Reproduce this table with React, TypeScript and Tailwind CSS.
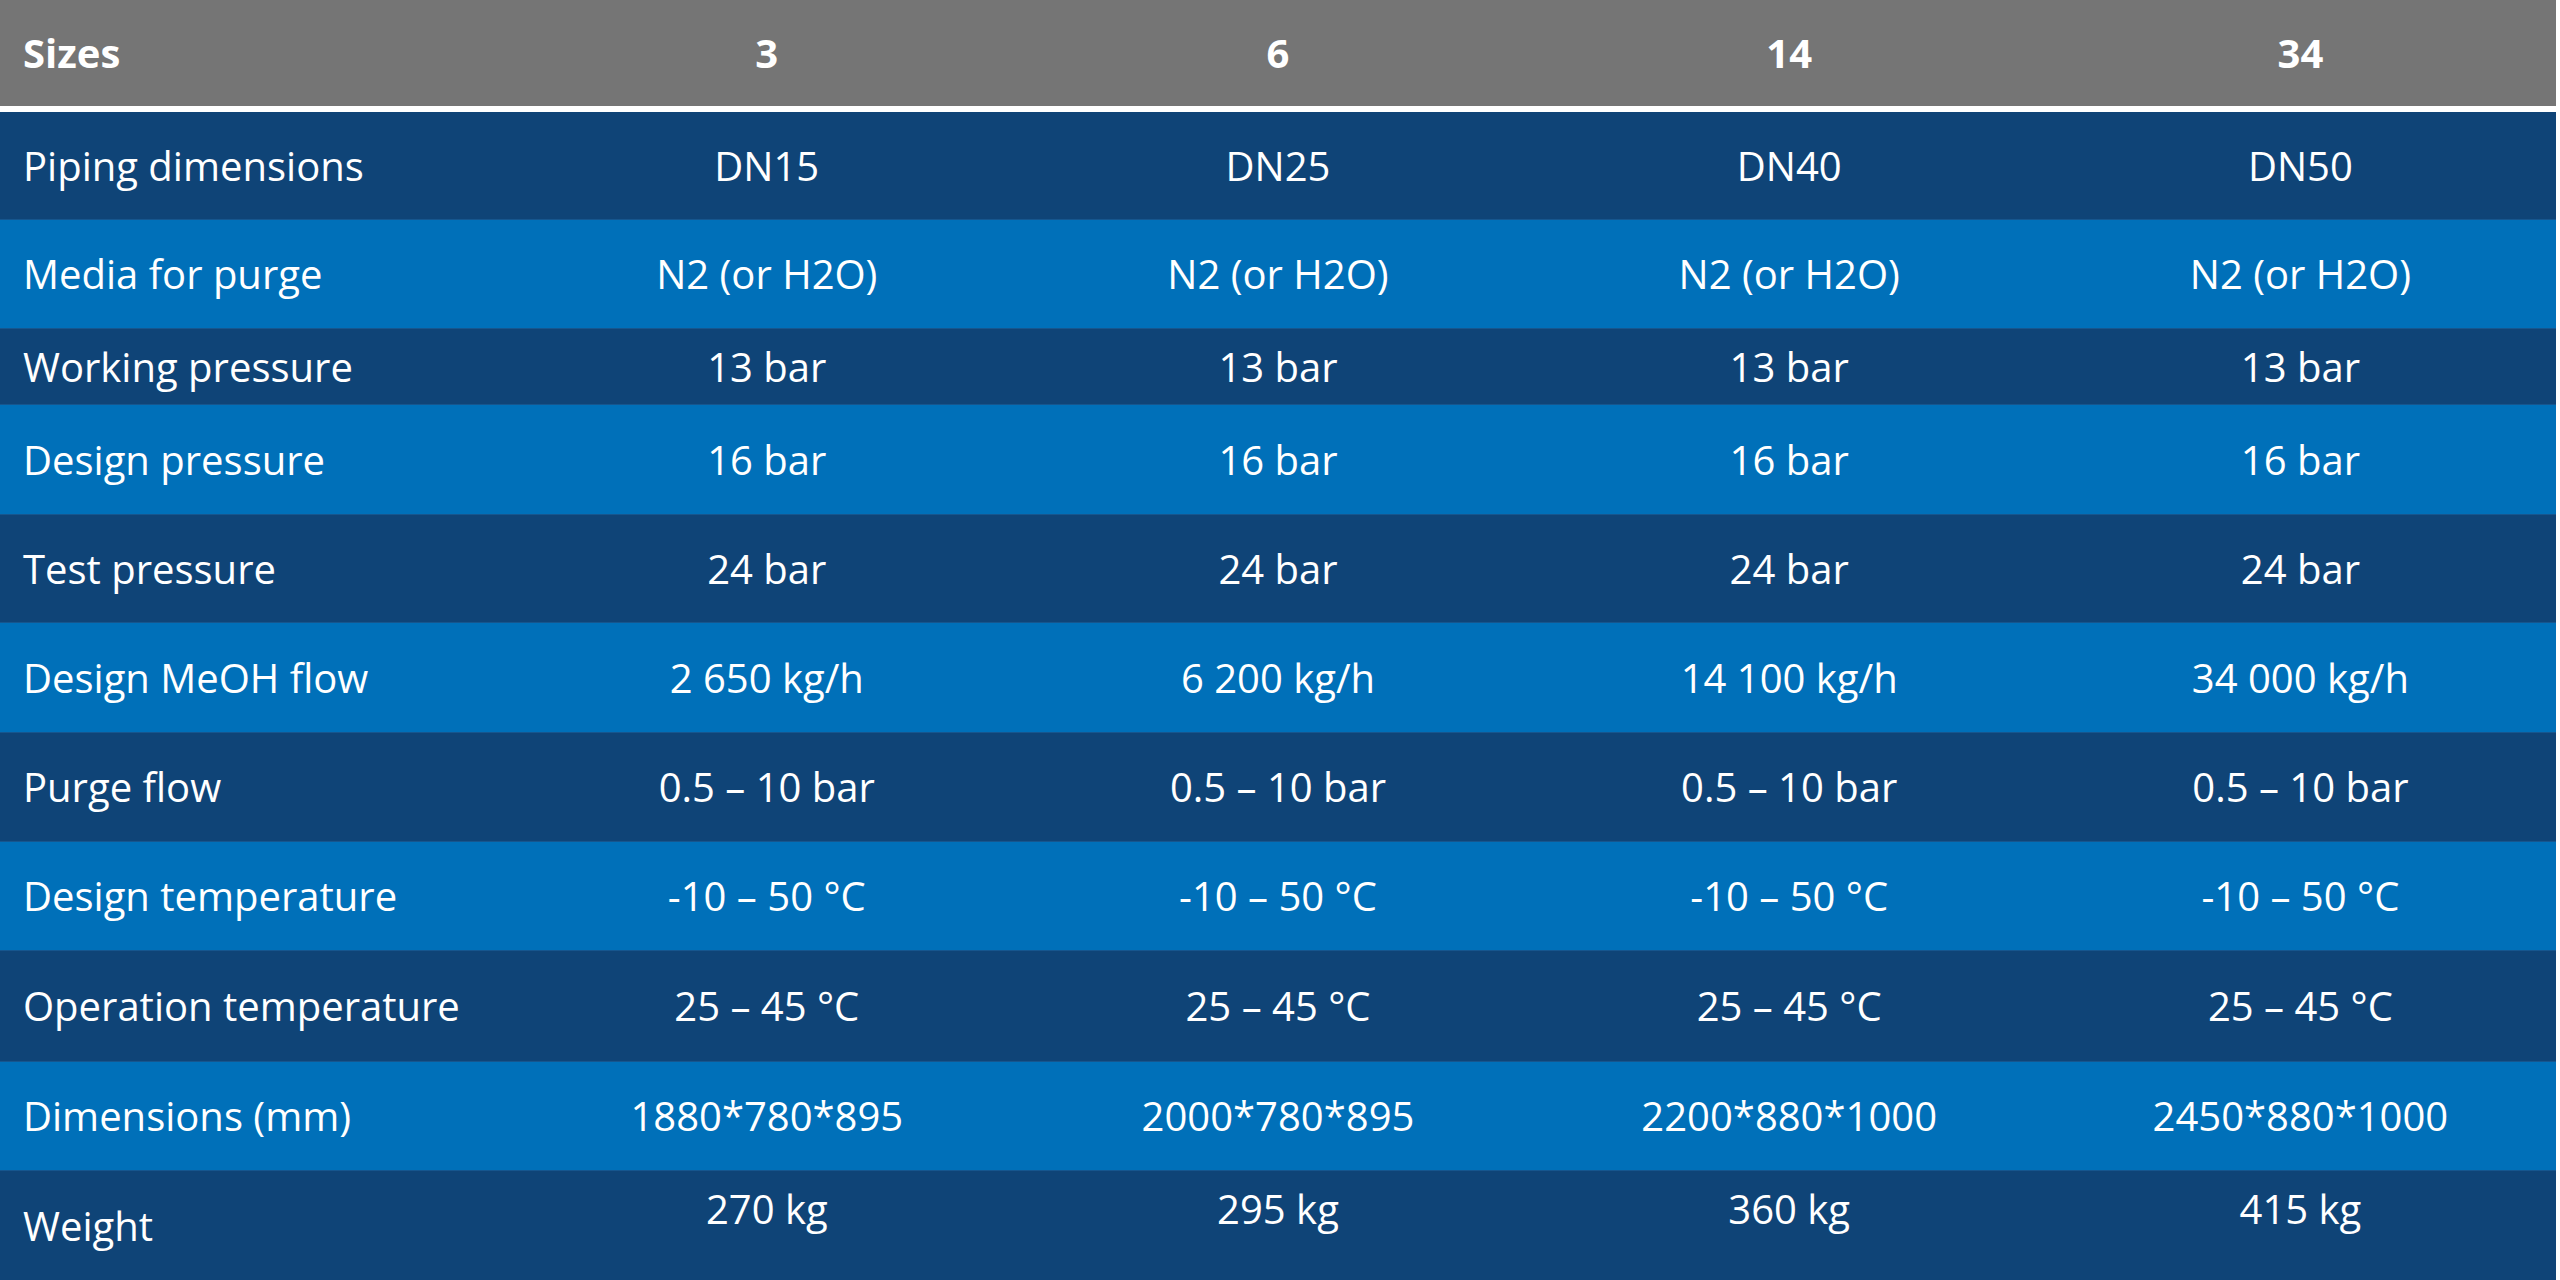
import React from "react"

type Row = {
  label: string
  values: string[]
  h: string
  tone: "dark" | "light"
  topValues?: boolean
}

const rows: Row[] = [
  { label: "Piping dimensions", values: ["DN15", "DN25", "DN40", "DN50"], h: "h-[107px]", tone: "dark" },
  { label: "Media for purge", values: ["N2 (or H2O)", "N2 (or H2O)", "N2 (or H2O)", "N2 (or H2O)"], h: "h-[109px]", tone: "light" },
  { label: "Working pressure", values: ["13 bar", "13 bar", "13 bar", "13 bar"], h: "h-[76px]", tone: "dark" },
  { label: "Design pressure", values: ["16 bar", "16 bar", "16 bar", "16 bar"], h: "h-[110px]", tone: "light" },
  { label: "Test pressure", values: ["24 bar", "24 bar", "24 bar", "24 bar"], h: "h-[108px]", tone: "dark" },
  { label: "Design MeOH flow", values: ["2 650 kg/h", "6 200 kg/h", "14 100 kg/h", "34 000 kg/h"], h: "h-[110px]", tone: "light" },
  { label: "Purge flow", values: ["0.5 – 10 bar", "0.5 – 10 bar", "0.5 – 10 bar", "0.5 – 10 bar"], h: "h-[109px]", tone: "dark" },
  { label: "Design temperature", values: ["-10 – 50 °C", "-10 – 50 °C", "-10 – 50 °C", "-10 – 50 °C"], h: "h-[109px]", tone: "light" },
  { label: "Operation temperature", values: ["25 – 45 °C", "25 – 45 °C", "25 – 45 °C", "25 – 45 °C"], h: "h-[111px]", tone: "dark" },
  { label: "Dimensions (mm)", values: ["1880*780*895", "2000*780*895", "2200*880*1000", "2450*880*1000"], h: "h-[109px]", tone: "light" },
  { label: "Weight", values: ["270 kg", "295 kg", "360 kg", "415 kg"], h: "h-[110px]", tone: "dark", topValues: true },
]

export default function App() {
  return (
    <div className="w-[2560px] h-[1280px] bg-white overflow-hidden font-['Open_Sans',sans-serif] text-white text-[40px]">
      <div className="w-[2556px]">
        {/* header */}
        <div className="grid grid-cols-5 h-[106px] bg-[#757575] font-bold border-b-[6px] border-white box-content">
          <div className="flex items-center pl-[23px]">Sizes</div>
          <div className="flex items-center justify-center">3</div>
          <div className="flex items-center justify-center">6</div>
          <div className="flex items-center justify-center">14</div>
          <div className="flex items-center justify-center">34</div>
        </div>

        {rows.map((row, i) => (
          <div
            key={row.label}
            className={`grid grid-cols-5 ${row.h} ${row.tone === "dark" ? "bg-[#0f4477]" : "bg-[#0070b9]"} ${i > 0 ? "border-t border-[#16568e]" : ""}`}
          >
            <div className="flex items-center pl-[23px]">{row.label}</div>
            {row.values.map((v, j) => (
              <div
                key={j}
                className={row.topValues ? "flex items-start justify-center pt-[8px]" : "flex items-center justify-center"}
              >
                {v}
              </div>
            ))}
          </div>
        ))}
      </div>
    </div>
  )
}
